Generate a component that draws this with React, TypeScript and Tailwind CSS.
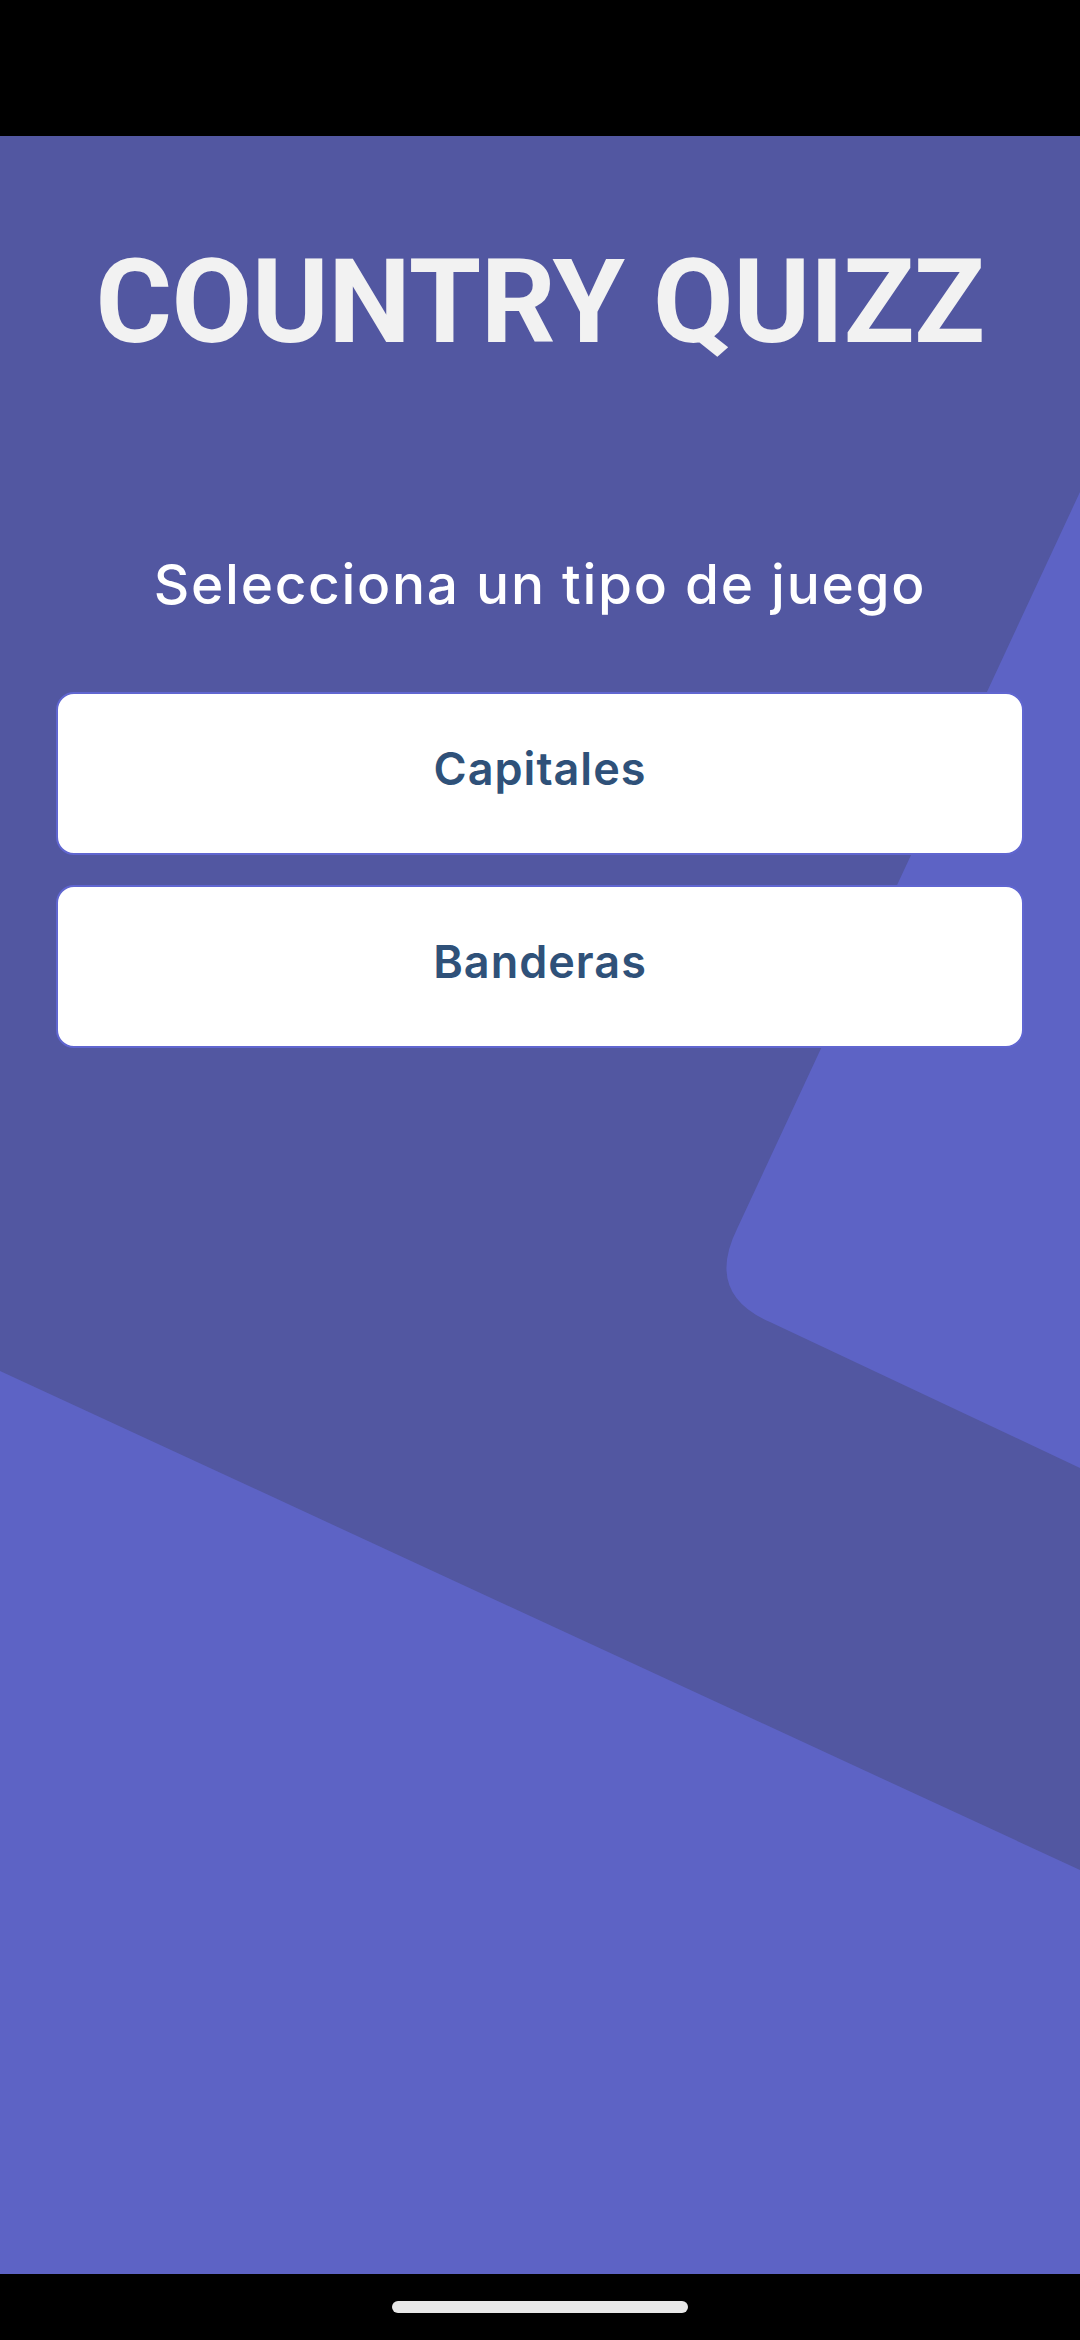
export default function App() {
  const modes = ['Capitales', 'Banderas']

  return (
    <div className="w-[1080px] h-[2340px] flex flex-col bg-black overflow-hidden">
      {/* status bar */}
      <div className="h-[136px] bg-black shrink-0" />

      <main className="relative flex-1 bg-[#5257a1] overflow-hidden">
        {/* background shapes */}
        <svg
          className="absolute inset-0"
          width="1080"
          height="2138"
          viewBox="0 0 1080 2138"
          fill="none"
        >
          <path
            d="M1080 356 L737 1093 Q705 1158 770 1186 L1080 1332 L1200 1332 L1200 356 Z"
            fill="#5d63c5"
          />
          <path d="M0 1235 L1080 1734 L1080 2138 L0 2138 Z" fill="#5d63c5" />
        </svg>

        <div className="relative flex flex-col items-center">
          <h1
            className="mt-[108px] text-[117px] leading-none font-bold text-[#f2f2f2] tracking-[-0.5px]"
            style={{ fontFamily: 'Roboto, "Liberation Sans", sans-serif' }}
          >
            COUNTRY QUIZZ
          </h1>

          <p
            className="mt-[196px] text-[55px] leading-none font-medium text-white tracking-[1.7px]"
            style={{ fontFamily: 'Inter, "Open Sans", sans-serif' }}
          >
            Selecciona un tipo de juego
          </p>

          <div className="mt-[80px] w-full px-[56px] flex flex-col gap-[30px]">
            {modes.map((mode) => (
              <button
                key={mode}
                className="h-[163px] w-full rounded-[18px] bg-white border-2 border-[#6066d0] flex items-center justify-center pb-[10px] text-[45px] font-semibold text-[#2f5179] tracking-[1px]"
                style={{ fontFamily: 'Inter, "Open Sans", sans-serif' }}
              >
                {mode}
              </button>
            ))}
          </div>
        </div>
      </main>

      {/* navigation bar */}
      <div className="h-[66px] bg-black shrink-0 flex justify-center pt-[27px]">
        <div className="w-[296px] h-[12px] rounded-full bg-[#e8e8e8]" />
      </div>
    </div>
  )
}
